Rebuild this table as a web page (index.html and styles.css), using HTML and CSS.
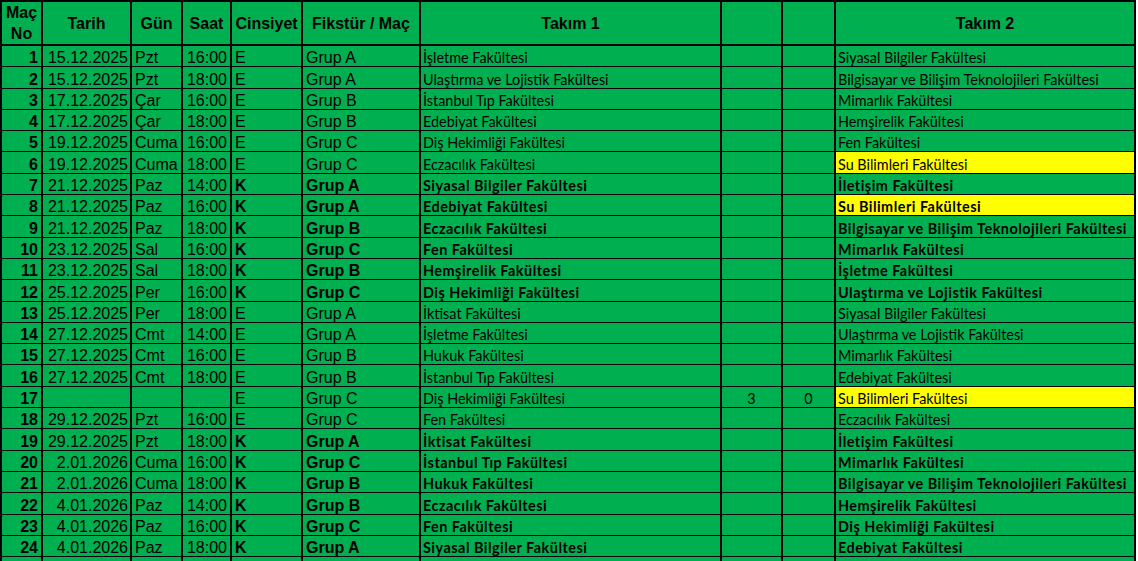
FILE: index.html
```html
<!DOCTYPE html>
<html lang="tr">
<head>
<meta charset="utf-8">
<title>Fikstür</title>
<link rel="stylesheet" href="styles.css">
</head>
<body>
<div class="sheet">
  <div class="row head">
    <div class="c h no">Maç<br>No</div>
    <div class="c h">Tarih</div>
    <div class="c h">Gün</div>
    <div class="c h">Saat</div>
    <div class="c h">Cinsiyet</div>
    <div class="c h">Fikstür / Maç</div>
    <div class="c h">Takım 1</div>
    <div class="c h"></div>
    <div class="c h"></div>
    <div class="c h">Takım 2</div>
  </div>
  <div class="row"><div class="c n">1</div><div class="c d">15.12.2025</div><div class="c g">Pzt</div><div class="c t">16:00</div><div class="c l">E</div><div class="c l">Grup A</div><div class="c k">İşletme Fakültesi</div><div class="c s"></div><div class="c s"></div><div class="c k">Siyasal Bilgiler Fakültesi</div></div>
  <div class="row"><div class="c n">2</div><div class="c d">15.12.2025</div><div class="c g">Pzt</div><div class="c t">18:00</div><div class="c l">E</div><div class="c l">Grup A</div><div class="c k">Ulaştırma ve Lojistik Fakültesi</div><div class="c s"></div><div class="c s"></div><div class="c k">Bilgisayar ve Bilişim Teknolojileri Fakültesi</div></div>
  <div class="row"><div class="c n">3</div><div class="c d">17.12.2025</div><div class="c g">Çar</div><div class="c t">16:00</div><div class="c l">E</div><div class="c l">Grup B</div><div class="c k">İstanbul Tıp Fakültesi</div><div class="c s"></div><div class="c s"></div><div class="c k">Mimarlık Fakültesi</div></div>
  <div class="row"><div class="c n">4</div><div class="c d">17.12.2025</div><div class="c g">Çar</div><div class="c t">18:00</div><div class="c l">E</div><div class="c l">Grup B</div><div class="c k">Edebiyat Fakültesi</div><div class="c s"></div><div class="c s"></div><div class="c k">Hemşirelik Fakültesi</div></div>
  <div class="row"><div class="c n">5</div><div class="c d">19.12.2025</div><div class="c g">Cuma</div><div class="c t">16:00</div><div class="c l">E</div><div class="c l">Grup C</div><div class="c k">Diş Hekimliği Fakültesi</div><div class="c s"></div><div class="c s"></div><div class="c k">Fen Fakültesi</div></div>
  <div class="row"><div class="c n">6</div><div class="c d">19.12.2025</div><div class="c g">Cuma</div><div class="c t">18:00</div><div class="c l">E</div><div class="c l">Grup C</div><div class="c k">Eczacılık Fakültesi</div><div class="c s"></div><div class="c s"></div><div class="c k y">Su Bilimleri Fakültesi</div></div>
  <div class="row bold"><div class="c n">7</div><div class="c d">21.12.2025</div><div class="c g">Paz</div><div class="c t">14:00</div><div class="c l">K</div><div class="c l">Grup A</div><div class="c k">Siyasal Bilgiler Fakültesi</div><div class="c s"></div><div class="c s"></div><div class="c k">İletişim Fakültesi</div></div>
  <div class="row bold"><div class="c n">8</div><div class="c d">21.12.2025</div><div class="c g">Paz</div><div class="c t">16:00</div><div class="c l">K</div><div class="c l">Grup A</div><div class="c k">Edebiyat Fakültesi</div><div class="c s"></div><div class="c s"></div><div class="c k y">Su Bilimleri Fakültesi</div></div>
  <div class="row bold"><div class="c n">9</div><div class="c d">21.12.2025</div><div class="c g">Paz</div><div class="c t">18:00</div><div class="c l">K</div><div class="c l">Grup B</div><div class="c k">Eczacılık Fakültesi</div><div class="c s"></div><div class="c s"></div><div class="c k">Bilgisayar ve Bilişim Teknolojileri Fakültesi</div></div>
  <div class="row bold"><div class="c n">10</div><div class="c d">23.12.2025</div><div class="c g">Sal</div><div class="c t">16:00</div><div class="c l">K</div><div class="c l">Grup C</div><div class="c k">Fen Fakültesi</div><div class="c s"></div><div class="c s"></div><div class="c k">Mimarlık Fakültesi</div></div>
  <div class="row bold"><div class="c n">11</div><div class="c d">23.12.2025</div><div class="c g">Sal</div><div class="c t">18:00</div><div class="c l">K</div><div class="c l">Grup B</div><div class="c k">Hemşirelik Fakültesi</div><div class="c s"></div><div class="c s"></div><div class="c k">İşletme Fakültesi</div></div>
  <div class="row bold"><div class="c n">12</div><div class="c d">25.12.2025</div><div class="c g">Per</div><div class="c t">16:00</div><div class="c l">K</div><div class="c l">Grup C</div><div class="c k">Diş Hekimliği Fakültesi</div><div class="c s"></div><div class="c s"></div><div class="c k">Ulaştırma ve Lojistik Fakültesi</div></div>
  <div class="row"><div class="c n">13</div><div class="c d">25.12.2025</div><div class="c g">Per</div><div class="c t">18:00</div><div class="c l">E</div><div class="c l">Grup A</div><div class="c k">İktisat Fakültesi</div><div class="c s"></div><div class="c s"></div><div class="c k">Siyasal Bilgiler Fakültesi</div></div>
  <div class="row"><div class="c n">14</div><div class="c d">27.12.2025</div><div class="c g">Cmt</div><div class="c t">14:00</div><div class="c l">E</div><div class="c l">Grup A</div><div class="c k">İşletme Fakültesi</div><div class="c s"></div><div class="c s"></div><div class="c k">Ulaştırma ve Lojistik Fakültesi</div></div>
  <div class="row"><div class="c n">15</div><div class="c d">27.12.2025</div><div class="c g">Cmt</div><div class="c t">16:00</div><div class="c l">E</div><div class="c l">Grup B</div><div class="c k">Hukuk Fakültesi</div><div class="c s"></div><div class="c s"></div><div class="c k">Mimarlık Fakültesi</div></div>
  <div class="row"><div class="c n">16</div><div class="c d">27.12.2025</div><div class="c g">Cmt</div><div class="c t">18:00</div><div class="c l">E</div><div class="c l">Grup B</div><div class="c k">İstanbul Tıp Fakültesi</div><div class="c s"></div><div class="c s"></div><div class="c k">Edebiyat Fakültesi</div></div>
  <div class="row"><div class="c n">17</div><div class="c d"></div><div class="c g"></div><div class="c t"></div><div class="c l">E</div><div class="c l">Grup C</div><div class="c k">Diş Hekimliği Fakültesi</div><div class="c s">3</div><div class="c s">0</div><div class="c k y">Su Bilimleri Fakültesi</div></div>
  <div class="row"><div class="c n">18</div><div class="c d">29.12.2025</div><div class="c g">Pzt</div><div class="c t">16:00</div><div class="c l">E</div><div class="c l">Grup C</div><div class="c k">Fen Fakültesi</div><div class="c s"></div><div class="c s"></div><div class="c k">Eczacılık Fakültesi</div></div>
  <div class="row bold"><div class="c n">19</div><div class="c d">29.12.2025</div><div class="c g">Pzt</div><div class="c t">18:00</div><div class="c l">K</div><div class="c l">Grup A</div><div class="c k">İktisat Fakültesi</div><div class="c s"></div><div class="c s"></div><div class="c k">İletişim Fakültesi</div></div>
  <div class="row bold"><div class="c n">20</div><div class="c d">2.01.2026</div><div class="c g">Cuma</div><div class="c t">16:00</div><div class="c l">K</div><div class="c l">Grup C</div><div class="c k">İstanbul Tıp Fakültesi</div><div class="c s"></div><div class="c s"></div><div class="c k">Mimarlık Fakültesi</div></div>
  <div class="row bold"><div class="c n">21</div><div class="c d">2.01.2026</div><div class="c g">Cuma</div><div class="c t">18:00</div><div class="c l">K</div><div class="c l">Grup B</div><div class="c k">Hukuk Fakültesi</div><div class="c s"></div><div class="c s"></div><div class="c k">Bilgisayar ve Bilişim Teknolojileri Fakültesi</div></div>
  <div class="row bold"><div class="c n">22</div><div class="c d">4.01.2026</div><div class="c g">Paz</div><div class="c t">14:00</div><div class="c l">K</div><div class="c l">Grup B</div><div class="c k">Eczacılık Fakültesi</div><div class="c s"></div><div class="c s"></div><div class="c k">Hemşirelik Fakültesi</div></div>
  <div class="row bold"><div class="c n">23</div><div class="c d">4.01.2026</div><div class="c g">Paz</div><div class="c t">16:00</div><div class="c l">K</div><div class="c l">Grup C</div><div class="c k">Fen Fakültesi</div><div class="c s"></div><div class="c s"></div><div class="c k">Diş Hekimliği Fakültesi</div></div>
  <div class="row bold"><div class="c n">24</div><div class="c d">4.01.2026</div><div class="c g">Paz</div><div class="c t">18:00</div><div class="c l">K</div><div class="c l">Grup A</div><div class="c k">Siyasal Bilgiler Fakültesi</div><div class="c s"></div><div class="c s"></div><div class="c k">Edebiyat Fakültesi</div></div>
  <div class="row"><div class="c n"></div><div class="c d"></div><div class="c g"></div><div class="c t"></div><div class="c l"></div><div class="c l"></div><div class="c k"></div><div class="c s"></div><div class="c s"></div><div class="c k"></div></div>
</div>
</body>
</html>
```
FILE: styles.css
```css
html, body {
  margin: 0;
  padding: 0;
  background: #fff;
}

.sheet {
  display: grid;
  width: 1132px;
  padding: 2px 2px 0 2px;
  background: #000;
  grid-template-columns: 39px 87px 49px 47px 69px 116px 299px 59px 51px 298px;
  grid-template-rows: 43px repeat(25, 20.3px);
  column-gap: 2px;
  row-gap: 1px;
  font-family: "Liberation Sans", Arial, sans-serif;
  font-size: 16px;
  color: #000;
}

.row {
  display: contents;
}

.c {
  background: #00b050;
  display: flex;
  align-items: flex-end;
  line-height: 16px;
  white-space: nowrap;
  overflow: hidden;
  min-width: 0;
}

.h {
  border-bottom: 1px solid #000;
  align-items: center;
  justify-content: center;
  text-align: center;
  font-weight: bold;
  font-size: 16px;
  line-height: 21px;
}

.n {
  justify-content: flex-end;
  padding-right: 3px;
  font-weight: bold;
}

.d {
  justify-content: flex-end;
  padding-right: 2px;
}

.t {
  justify-content: flex-end;
  padding-right: 3px;
}

.g,
.l {
  padding-left: 3px;
}

.k {
  padding-left: 2px;
  font-family: Lato, "Noto Sans", sans-serif;
  font-size: 14.4px;
}

.s {
  justify-content: center;
  font-family: Lato, "Noto Sans", sans-serif;
  font-size: 14.4px;
}

.bold .l,
.bold .k {
  font-weight: bold;
}

.bold .k {
  letter-spacing: 0.5px;
}

.y {
  background: #ffff00;
}
```
